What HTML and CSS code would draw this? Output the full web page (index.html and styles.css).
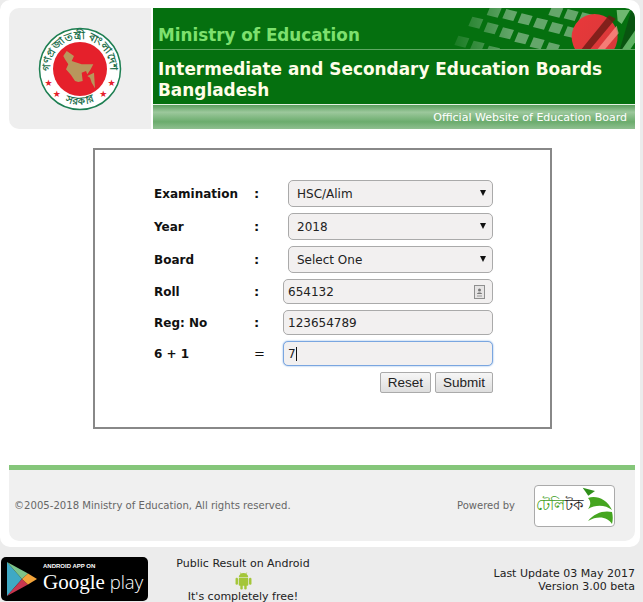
FILE: index.html

```html
<!DOCTYPE html>
<html>
<head>
  <title>Intermediate and Secondary Education Boards Bangladesh</title>
  <link rel="stylesheet" href="styles.css">
</head>
<body>
  <div class="card">
    <div class="header">
      <div class="logo-panel">
        <svg class="emblem" width="84" height="84" viewBox="0 0 84 84">
          <circle cx="42" cy="42" r="40.500" fill="#fff" stroke="#1d7f52" stroke-width="1.500"/>
          <defs>
            <path id="ringTop" d="M13.800 52.300 A30 30 0 1 1 70.200 52.300"/>
            <path id="ringBottom" d="M20 70 A36 36 0 0 0 64 70"/>
          </defs>
          <text class="emblem-text"><textPath href="#ringTop" startOffset="50%">গণপ্রজাতন্ত্রী বাংলাদেশ</textPath></text>
          <text class="emblem-text"><textPath href="#ringBottom" startOffset="50%">সরকার</textPath></text>
          <circle cx="42" cy="42" r="27" fill="#e5202b"/>
          <path d="M28.700 24 L36 29 L33.700 34 L43.700 37.300 L55.300 37.300 L52.700 42.300 L49.300 47.300 L48 44 L43.700 45.700 L44.700 54 L40.300 55 L37 54 L33 48 L28 42.300 L30.300 37.300 L27 32.300 L25.300 29 Z M49.300 49 L56 45.700 L57 61.300 L53.700 55.700 L52 50.700 Z" fill="#b8975c"/>
          <g class="emblem-stars">
            <text x="10.500" y="58.500">★</text>
            <text x="73.500" y="58.500">★</text>
            <text x="18.700" y="69.500">★</text>
            <text x="65.300" y="69.500">★</text>
          </g>
        </svg>
      </div>
      <div class="banner">
        <div class="ministry">
          <svg class="flag-art" width="230" height="41" viewBox="0 0 230 41">
            <defs>
              <linearGradient id="fade" gradientUnits="userSpaceOnUse" x1="40" x2="260" y1="0" y2="0">
                <stop offset="0" stop-color="#fff" stop-opacity="0"/>
                <stop offset="1" stop-color="#fff" stop-opacity="0.38"/>
              </linearGradient>
              <linearGradient id="red" x1="0" x2="1" y1="0.2" y2="0.8">
                <stop offset="0" stop-color="#e8383a"/>
                <stop offset="1" stop-color="#d8393a"/>
              </linearGradient>
              <clipPath id="bandClip"><rect width="230" height="41"/></clipPath>
            </defs>
            <g clip-path="url(#bandClip)">
              <g transform="translate(20,-0.670) scale(0.3333)">
                <path fill="url(#fade)" d="M197 -5l33 8l-12 28l-33-8zM244 5l33 8l-12 28l-33-8zM290 18l33 8l-12 28l-33-8zM336 31l33 8l-12 28l-33-8zM382 44l33 8l-12 28l-33-8zM428 57l33 8l-12 28l-33-8zM382 -5l33 8l-12 28l-33-8zM428 5l33 8l-12 28l-33-8zM472 15l33 8l-12 28l-33-8zM142 28l33 8l-12 28l-33-8zM188 45l33 8l-12 28l-33-8zM234 60l33 8l-12 28l-33-8zM280 75l33 8l-12 28l-33-8zM326 90l33 8l-12 28l-33-8zM372 105l33 8l-12 28l-33-8zM100 85l33 8l-12 28l-33-8zM146 100l33 8l-12 28l-33-8zM192 115l33 8l-12 28l-33-8z"/>
                <path d="M620 5H640V55L600 125H585Z" fill="#0a4d10" opacity="0.8"/>
                <path d="M575 8H615L590 50L578 40Z" fill="#8acb88" opacity="0.8"/>
                <path d="M585 135L640 55V90L610 135Z" fill="#6fbe72" opacity="0.85"/>
                <circle cx="509" cy="89" r="69" fill="url(#red)"/>
                <path d="M462 135L552 24L572 34L488 135Z" fill="#6b1a14" opacity="0.8"/>
                <path d="M510 135L575 55L581 78L532 135Z" fill="#ff9a90" opacity="0.7"/>
              </g>
            </g>
          </svg>
          <span class="ministry-name">Ministry of Education</span>
        </div>
        <div class="board-title">Intermediate and Secondary Education Boards Bangladesh</div>
        <div class="tagline">Official Website of Education Board</div>
      </div>
    </div>

    <div class="form-box">
      <form class="result-form">
        <label>Examination</label><span class="sep">:</span>
        <div class="select-wrap"><select><option>HSC/Alim</option></select></div>

        <label>Year</label><span class="sep">:</span>
        <div class="select-wrap"><select><option>2018</option></select></div>

        <label>Board</label><span class="sep">:</span>
        <div class="select-wrap"><select><option>Select One</option></select></div>

        <label>Roll</label><span class="sep">:</span>
        <div class="input-wrap">
          <input type="text" value="654132">
          <svg class="contact-icon" width="11" height="14" viewBox="0 0 11 14">
            <rect x="0.500" y="0.500" width="10" height="13" fill="#e6e4e4" stroke="#8f8f8f"/>
            <circle cx="5.500" cy="5" r="1.500" fill="#777"/>
            <path d="M3 9c0-2 5-2 5 0z" fill="#777"/>
            <path d="M3 11h5" stroke="#999"/>
          </svg>
        </div>

        <label>Reg: No</label><span class="sep">:</span>
        <div class="input-wrap"><input type="text" value="123654789"></div>

        <label>6 + 1</label><span class="sep sep-eq">=</span>
        <div class="input-wrap">
          <input class="focused" type="text" value="7">
          <span class="caret"></span>
        </div>

        <div class="actions">
          <button type="button">Reset</button>
          <button type="button">Submit</button>
        </div>
      </form>
    </div>

    <div class="footer">
      <span class="copyright">©2005-2018 Ministry of Education, All rights reserved.</span>
      <span class="powered">Powered by</span>
      <div class="teletalk">
        <span class="teletalk-name"><span class="tele-green">টেলি</span>টক</span>
        <svg width="31" height="38" viewBox="0 0 31 38">
          <path d="M0.700 0.700L13 4L6.300 8.700Z" fill="#2f8f1a"/>
          <path d="M6 11C14 8 25 12 30 23C24 18 14 17 6 22C9 18 9 14 6 11Z" fill="#45a520"/>
          <path d="M6 34C12 26 22 23 30 25C31 29 31 33 30 37C26 30 16 28 6 34Z" fill="#45a520"/>
        </svg>
      </div>
    </div>
  </div>

  <div class="bottom">
    <div class="play-badge">
      <svg width="32" height="36" viewBox="0 0 32 36">
        <path d="M1 1L16 18L1 35Z" fill="#3fa9c4"/>
        <path d="M1 1L22 12.500L16 18Z" fill="#7cc48a"/>
        <path d="M1 35L22 23.500L16 18Z" fill="#c9364f"/>
        <path d="M22 12.500L31 18L22 23.500L16 18Z" fill="#f2a33a"/>
      </svg>
      <div class="play-text">
        <span class="play-small">ANDROID APP ON</span>
        <span class="play-big"><span class="play-google">Google</span> play</span>
      </div>
    </div>
    <div class="android-note">
      <span>Public Result on Android</span>
      <svg width="17" height="19" viewBox="0 0 16 17">
        <path d="M3.500 5.500C3.700 3 5.600 1.500 8 1.500s4.300 1.500 4.500 4z" fill="#a4c639"/>
        <path d="M5 1L6 3M11 1L10 3" stroke="#a4c639" stroke-width="0.700"/>
        <rect x="3.500" y="6" width="9" height="7.500" rx="1" fill="#a4c639"/>
        <rect x="0.500" y="6" width="2.300" height="6.500" rx="1.100" fill="#a4c639"/>
        <rect x="13.200" y="6" width="2.300" height="6.500" rx="1.100" fill="#a4c639"/>
        <rect x="5" y="12" width="2.300" height="5" rx="1.100" fill="#a4c639"/>
        <rect x="8.700" y="12" width="2.300" height="5" rx="1.100" fill="#a4c639"/>
      </svg>
      <span>It's completely free!</span>
    </div>
    <div class="version">Last Update 03 May 2017<br>Version 3.00 beta</div>
  </div>
</body>
</html>
```

FILE: styles.css

```css
body {
  margin: 0;
  background-color: #ececec;
  font-family: "DejaVu Sans", Verdana, sans-serif;
  color: #111;
}
.card {
  width: 640px;
  height: 547px;
  box-sizing: border-box;
  padding: 8px 5px 6px 9px;
  background-color: #fff;
  border-radius: 10px;
  display: flex;
  flex-direction: column;
}
.header {
  display: flex;
  height: 121px;
}
.logo-panel {
  width: 142px;
  background-color: #eee;
  border-radius: 10px 0 0 10px;
  margin-right: 2px;
  display: flex;
  align-items: center;
  justify-content: center;
}
.emblem-text {
  font-size: 10.5px;
  font-weight: bold;
  font-family: "Noto Sans", sans-serif;
  fill: #1d6f4c;
  text-anchor: middle;
}
.emblem-stars {
  fill: #e5202b;
  font-size: 9px;
  font-family: "DejaVu Sans", sans-serif;
  text-anchor: middle;
}
.banner {
  flex: 1;
  background-color: #05700f;
  border-radius: 0 10px 0 0;
  display: flex;
  flex-direction: column;
  position: relative;
  overflow: hidden;
}
.ministry {
  height: 42px;
  box-sizing: border-box;
  border-bottom: 1px solid #5fa863;
  display: flex;
  align-items: center;
  padding: 14px 0 0 5px;
  position: relative;
}
.flag-art {
  position: absolute;
  top: 0;
  right: 0;
}
.ministry-name {
  position: relative;
  font-size: 16.8px;
  font-weight: bold;
  color: #7ee06e;
}
.board-title {
  height: 55px;
  box-sizing: border-box;
  padding: 9px 20px 0 5px;
  font-size: 16.9px;
  line-height: 21px;
  font-weight: bold;
  color: #fffde8;
}
.tagline {
  flex: 1;
  border-top: 1px solid #e4f1e2;
  background: linear-gradient(#5c9f5f, #9cc89c 30%, #6bac6d 70%, #8fbf90);
  color: #fff;
  font-size: 11px;
  text-align: right;
  padding: 2px 8px 0 0;
  line-height: 22px;
}
.form-box {
  width: 459px;
  height: 281px;
  box-sizing: border-box;
  margin: 19px 0 0 84px;
  border: 2px solid #888;
  padding: 30px 0 0 59px;
}
.result-form {
  display: grid;
  grid-template-columns: 100px 29px 210px;
  row-gap: 6px;
  align-items: center;
}
.result-form label {
  font-size: 12px;
  font-weight: bold;
}
.sep {
  font-size: 13px;
  font-weight: bold;
}
.sep-eq {
  font-weight: normal;
}
.select-wrap {
  padding-left: 5px;
  position: relative;
}
.select-wrap::after {
  content: "";
  position: absolute;
  top: 10px;
  right: 7px;
  border-left: 3.5px solid transparent;
  border-right: 3.5px solid transparent;
  border-top: 6px solid #111;
}
select, input {
  display: block;
  width: 100%;
  box-sizing: border-box;
  background-color: #f2f0f0;
  border: 1px solid #aaa;
  border-radius: 5px;
  color: #222;
  font-family: "DejaVu Sans", Verdana, sans-serif;
  font-size: 12px;
  outline: none;
}
select {
  height: 27px;
  appearance: none;
  padding-left: 8px;
}
input {
  height: 25px;
  padding-left: 4px;
}
.input-wrap {
  position: relative;
}
.contact-icon {
  position: absolute;
  top: 6px;
  right: 8px;
}
.caret {
  position: absolute;
  top: 6px;
  left: 13px;
  width: 1px;
  height: 14px;
  background-color: #111;
}
input.focused {
  border-color: #7aa6e0;
  box-shadow: 0 0 2px #7aa6e0;
}
.actions {
  grid-column: 1 / -1;
  display: flex;
  justify-content: flex-end;
  gap: 4px;
}
button {
  height: 21px;
  padding: 0 7px;
  background: linear-gradient(#f6f6f6, #dedede);
  border: 1px solid #aaa;
  border-radius: 2px;
  color: #222;
  font-family: "Liberation Sans", Arial, sans-serif;
  font-size: 13.5px;
}
.footer {
  margin-top: 36px;
  height: 76px;
  box-sizing: border-box;
  border-top: 5px solid #85c67a;
  background-color: #f0f0f0;
  border-radius: 0 0 10px 10px;
  display: flex;
  align-items: center;
  padding: 0 20px 0 5px;
  font-size: 10px;
  color: #666;
}
.copyright {
  flex: 1;
  font-size: 10.1px;
}
.powered {
  margin-right: 19px;
}
.teletalk {
  width: 81px;
  height: 42px;
  box-sizing: border-box;
  background-color: #fff;
  border: 1px solid #aaa;
  border-radius: 4px;
  display: flex;
  align-items: center;
  padding-left: 1px;
}
.teletalk-name {
  width: 46px;
  font-family: "Noto Sans", sans-serif;
  font-size: 14.5px;
  white-space: nowrap;
  color: #222;
}
.tele-green {
  color: #3f9e1d;
}
.bottom {
  display: flex;
  height: 55px;
  align-items: flex-start;
  font-size: 11px;
  color: #222;
}
.play-badge {
  margin: 10px 0 0 1px;
  width: 147px;
  height: 44px;
  box-sizing: border-box;
  background-color: #000;
  border-radius: 5px;
  display: flex;
  align-items: center;
  padding-left: 5px;
  color: #fff;
}
.play-text {
  display: flex;
  flex-direction: column;
  margin-left: 5px;
}
.play-small {
  font-size: 6px;
  font-weight: bold;
  font-family: "Liberation Sans", sans-serif;
}
.play-big {
  font-family: "Open Sans", sans-serif;
  font-size: 18.5px;
  line-height: 25px;
  font-weight: 300;
  white-space: nowrap;
}
.play-google {
  font-family: "Liberation Serif", serif;
  font-size: 21px;
}
.android-note {
  width: 190px;
  margin: 10px 0 0 0;
  display: flex;
  flex-direction: column;
  align-items: center;
  line-height: 14px;
}
.version {
  flex: 1;
  text-align: right;
  margin-top: 20px;
  line-height: 13px;
  padding-right: 8px;
}
```
